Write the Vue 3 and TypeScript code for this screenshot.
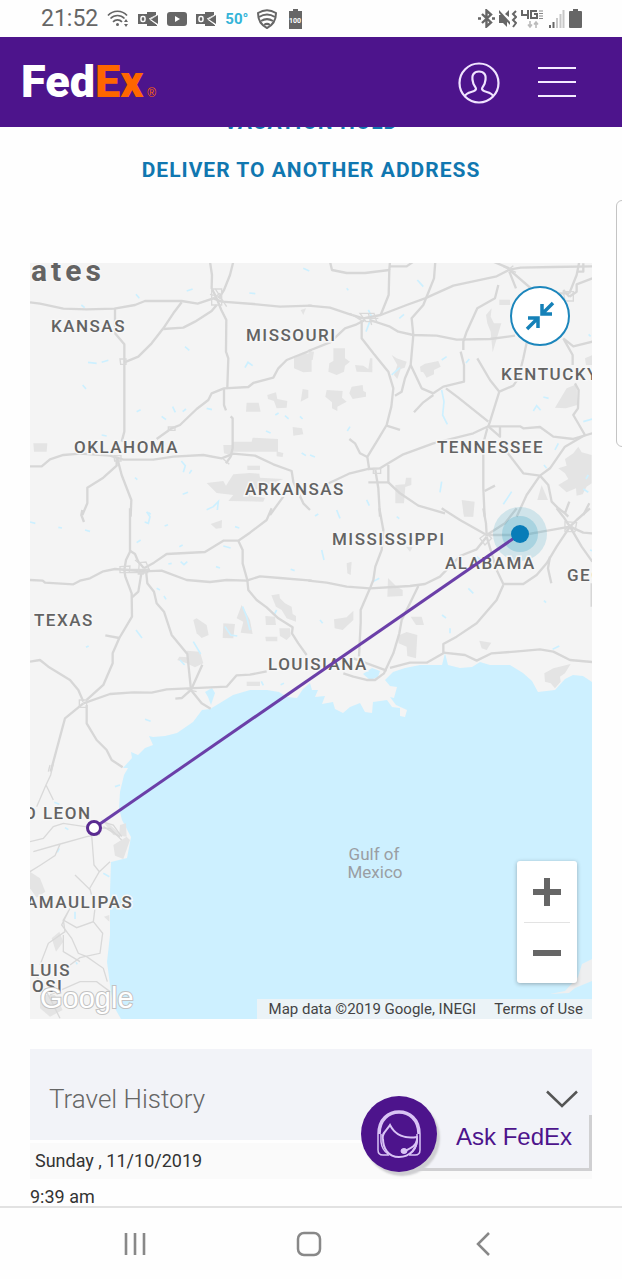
<script setup lang="ts">
import { ref } from 'vue'

interface Tile {
  x: number
  y: number
  roads: string[]
  minor: string[]
  land: string[]
  lakes: string[]
}

interface Label {
  x: number
  y: number
  text: string
}

/* Each tile is drawn at three units per map pixel, from its own origin. */
const tiles: Tile[] = [
  {
    x: 20,
    y: 255,
    roads: [
      'M30 142L60 146L130 161L200 163L283 161L345 150L375 138L485 138L533 146L580 130L605 140L700 147L780 155L875 152',
      'M570 20L576 60L575 100L590 130L604 165L619 195L618 290L625 310L622 398',
      'M640 20L630 60L612 105L596 130',
      'M285 160V235L313 268V530L305 560',
      'M485 142L460 175L430 220L395 265L355 305L313 322',
      'M430 222L490 218L525 200L575 168L590 150',
      'M410 552L455 520L480 510L530 462L565 435L575 415L612 400L685 396L700 384L760 368L775 340L800 315L875 285',
      'M612 402V450L618 466',
      'M632 484L638 490V580L632 605L618 625',
      'M30 634H65L90 613L130 600L180 596L270 602L310 614L400 614L460 605L550 600L605 610L640 596L705 602L760 628L815 648L820 680L850 745L870 765',
      'M290 605V632L250 668L202 698V745L187 780',
      'M292 610L305 660L334 735L332 785',
      'M750 780L790 725'
    ],
    minor: [
      'M575 102H605V150H575ZM570 118L596 124L614 145M585 100L620 155M572 135L600 115',
      'M300 312H318V328H302ZM445 516H465V526H445Z',
      'M282 602H303V618H284ZM610 612L628 628'
    ],
    land: [
      'M822 310L850 292L875 300V350L850 352L822 340Z',
      'M680 443H716L722 470H678Z',
      'M742 420L768 412L772 432L802 438L800 458L770 460L762 438L744 432Z',
      'M848 402L865 405V428L842 440Z',
      'M818 516L846 520L850 538L820 542Z',
      'M610 570H635L640 560L695 560L698 548L774 552V590L790 594L788 606L770 604V590L635 590L632 600L612 595Z',
      'M682 632H720V645H682Z',
      'M560 684L610 678L618 692L640 658L690 654L718 656L720 668L790 672L740 690L720 700L690 708V722L735 728L730 740L625 738L640 720L590 714Z',
      'M40 565L82 565L80 590L42 590Z',
      'M842 165L858 160L850 180Z'
    ],
    lakes: [
      'M348 118L358 130M184 150L194 158M500 108L518 102M495 275L508 286M204 322L230 325M245 322L265 316M188 390L198 402',
      'M675 338L684 322L698 332M458 455L466 472M488 470L498 462M425 484L438 494M560 460L576 464M350 470L362 464',
      'M245 540L260 543M484 618L496 632L490 652M515 645L508 656M345 668L352 674M738 528L752 534M766 480L776 474M795 482L806 492M840 484L848 492M845 594L858 602',
      'M560 764L580 755L595 740L592 765M488 718L504 712M385 772L392 778M688 114L706 116M850 40L868 48'
    ]
  },
  {
    x: 310,
    y: 255,
    roads: [
      'M60 20L66 45L110 54L165 54L238 45L236 120L212 180',
      'M238 45L240 20M240 34H290L310 20',
      'M376 20L372 70L340 150L305 190L310 240L302 330L285 370L275 410L255 422',
      'M-5 152L60 158L120 178L160 190L212 180L290 150L345 130L430 92L560 64L598 44L632 38L730 36L847 34',
      'M-5 288L60 262L105 220L140 208L165 195',
      'M598 40L550 20M598 44L665 102M598 50L618 100',
      'M808 20L800 60L778 115M778 115L740 115M778 125L800 110V88L847 70M805 50H820V25',
      'M778 125L760 105M760 250L788 300V330M760 250L790 274L847 260',
      'M155 200V250L190 295L235 350L250 400L244 455L230 510L200 560L172 606L178 645',
      'M180 195L240 215L265 230L310 240L380 242L440 254L540 252L615 242',
      'M565 90L555 130L502 160L470 230L460 260V285',
      'M452 290L462 330V380L400 395L370 415L335 400L302 330',
      'M370 420L340 442L312 472',
      'M502 310L540 375L568 410',
      'M655 240L640 310L625 370L610 392L568 410L540 500L535 514',
      'M408 400L445 428L535 500',
      'M230 512L270 525',
      'M118 552L135 565L150 595L172 606',
      'M50 688L120 655L175 642L210 640L280 598L370 565L490 535L535 514L630 514L640 520L690 516L730 545L790 552L847 535',
      'M795 385L806 405L804 460L790 480L825 540',
      'M535 514L570 545V514',
      'M532 520L520 565V700L524 785',
      'M524 708L555 692',
      'M590 590L640 655L690 662L720 640L765 575L825 540',
      'M690 662L650 720L620 785M690 662L715 690L725 740L745 760L765 775L778 740M765 775L775 785M820 780L838 745',
      'M196 645L205 700L210 785M175 682H235V630',
      'M235 682L270 715L325 752L405 775'
    ],
    minor: [
      'M150 175H192L200 200H168ZM120 175L160 200M175 175L185 210M145 190L205 190',
      'M580 35L618 52M585 52L610 32M760 110H790V138H765Z',
      'M190 640H212V655H190Z'
    ],
    land: [
      'M70 280H105V310L120 320L105 332L102 350L80 360L55 350L58 325L70 318Z',
      'M135 330L160 332L175 342L180 310H187V352L140 350Z',
      'M125 395L158 390L160 408L168 412V425L128 432L118 415Z',
      'M50 405L98 408L96 428L110 440L82 455V468L66 460V442L46 425Z',
      'M330 335L345 326L385 318L392 335L372 345V358L350 368L340 352L332 350Z',
      'M528 180L545 160L542 185L552 205L574 205L548 292L542 230L532 205Z',
      'M568 134H600V150H568Z',
      'M735 458L752 430L770 400L800 388L802 450L768 460Z',
      'M745 640L770 632L765 612L790 595L805 575L815 592L845 600V685L830 695L818 718L800 722L798 700L770 712L745 690L775 672L765 655Z',
      'M256 690L285 688L288 668H304V690L286 696L282 745H256Z',
      'M455 735L494 740L490 785H462Z',
      'M682 735L695 690L714 735Z',
      'M245 300L260 310L290 320L284 338L272 342L262 372L252 360L262 330Z',
      'M-5 288L12 290L8 315L-5 316ZM825 310L847 300V330L828 330Z'
    ],
    lakes: [
      'M268 190L282 178M175 165L185 185L168 230M322 75L340 95M110 100L115 106M395 315L410 305M478 312L468 324M270 338L245 360',
      'M395 405L402 440L398 480L412 508M670 468L680 452L692 466M700 426L716 430M820 500L847 492M745 565L735 585M702 630L710 640M120 515L112 528M0 600L15 606',
      'M605 710L580 748M395 680L390 712M170 735L178 752M835 660L828 672M820 702L835 712M836 238L842 244'
    ]
  },
  {
    x: 20,
    y: 510,
    roads: [
      'M187 0L184 15L192 36M330 -5V125L318 150L313 180',
      'M330 122L345 132L355 155L372 175',
      'M30 210L68 212L75 218L160 223L180 212L210 205L250 184L285 177L370 184L425 182L500 210L570 216L620 210L680 212L720 199L780 204L875 212',
      'M372 175L402 158L440 132L555 126L610 92L655 92L690 68L740 30L755 -5',
      'M655 92L668 120V160L682 210L685 240L710 270L740 292L775 325L818 352L816 370L835 400L860 435',
      'M313 180L316 200L335 250L336 320L298 384L278 430V460L250 525L200 570',
      'M336 262L355 245L365 185L378 180L382 220L402 245L410 280L432 305L455 375L502 432L513 540',
      'M256 376L298 384M547 464L513 540M466 566L486 564L513 540L545 580L572 596',
      'M30 455L60 450L85 470L150 510L175 540L190 575',
      'M190 580L270 552L340 547L395 548L440 538L620 530L650 496L690 494L740 484',
      'M190 580L135 625L92 785M200 585V640L230 690L260 720L275 750L308 772'
    ],
    minor: [
      'M300 170L330 168L328 188H300ZM358 158L378 156L386 175L370 192H355ZM298 188H385M345 150L365 165M295 178H390',
      'M178 570H200V592H178ZM500 538L530 545'
    ],
    land: [
      'M520 330L530 325L560 345L566 375L545 384L530 370Z',
      'M610 340L645 342L640 385L608 384Z',
      'M665 285L690 330L698 372L662 368L670 335L650 325Z',
      'M754 256L778 252L780 265L795 280L815 290L818 312L828 318V335L800 325L785 300L768 290Z',
      'M736 318L765 320L768 345H738ZM778 355L810 355L812 378L800 390L780 378ZM736 380H772V394H738Z',
      'M500 422L540 425L550 460L525 472L500 460L472 450L478 440L505 442Z',
      'M572 42L606 30L605 54L588 56Z',
      'M680 515H720V528H680Z'
    ],
    lakes: [
      'M380 5L390 20L385 40L374 36M350 98L362 90M434 48L444 44M445 162L455 160M482 155L492 164L502 155M588 170L600 174M645 50L658 54',
      'M668 290L680 320L690 360M615 350L632 375L652 378M520 395L542 432M480 450L494 465M348 360L366 384M410 235L420 240M432 258L438 268M770 300L762 315M375 628L392 634',
      'M30 36L46 40M115 52L126 54M195 60L210 64M610 108L632 114M478 110L488 105M724 514L730 526M782 524L792 520M812 178L824 182M198 412L206 408'
    ]
  },
  {
    x: 310,
    y: 510,
    roads: [
      'M395 -5L450 30L530 75',
      'M520 -5L528 40L530 75M620 -5L585 40L530 75L640 75L700 64L780 50',
      'M208 -5L220 60L215 120L196 170L190 210L180 235L152 300V340L147 440',
      'M-5 212L50 218L110 230L180 235L300 228L345 222L390 200L450 138L500 118L530 80',
      'M325 228L300 280L275 330L268 370L250 430L222 490L195 510H170L130 500L100 490',
      'M530 80L560 180L580 222L640 222L680 195L710 160L740 110L780 50',
      'M580 225L560 270L500 340L440 380L400 402V430L350 458H300L240 474',
      'M400 428L465 435L500 452L545 430L615 425L690 418L730 425L780 450L847 456',
      'M780 50L760 20L740 -5M780 50L820 68L847 70M780 50L800 30L840 -5M780 50L815 110L847 155M720 140L714 175L724 220M845 220V290',
      'M130 445L230 482'
    ],
    minor: [
      'M765 35L800 38L795 65H765ZM770 40L800 60M765 60L795 35',
      'M510 85L530 70L545 85L525 105Z'
    ],
    land: [
      'M234 204L258 228L278 240V258L232 260Z',
      'M72 328L110 322L130 302V330L98 360L74 355Z',
      'M302 320L335 320L342 345H318Z',
      'M262 378L290 366L322 375L318 445L292 438L290 410L266 400Z',
      'M508 392L544 398L530 420L515 415Z',
      'M703 490L730 475L782 462L765 490L750 500L752 515L735 535L722 520L705 515Z',
      'M110 160L125 155L122 195L112 190Z',
      'M288 110L308 112L300 125Z',
      'M460 0H485L488 20L462 16Z'
    ],
    lakes: [
      'M188 215L208 205M475 235L490 250M396 315L408 324M728 418L748 408M80 0L90 25M35 120L42 150M420 355V370M702 272L708 278M30 330L38 340',
      'M15 18L25 12M840 120L847 122M260 20L268 26M500 140L510 148'
    ]
  },
  {
    x: 20,
    y: 765,
    roads: [],
    minor: [
      'M100 -5L92 30L78 60L50 125M78 60L100 105M30 230L70 220L100 185L130 175L215 188L270 190L305 225',
      'M40 260L110 240L200 215L240 208M120 238L105 272L62 300L30 320M215 210L222 300L238 320L270 290M238 320L208 372L165 330M210 372L225 430L220 470L170 488L130 465L150 430L125 480L155 520L175 565L200 575L250 610L262 650',
      'M220 470L248 505L240 565L180 578L150 600M130 465L135 500L85 535L60 600M30 620L60 645L90 700L120 760M90 690L180 650H230L270 680M250 185L300 215M245 170L280 180L305 215M90 0L85 20M130 510L130 560L180 590'
    ],
    land: [
      'M280 240L320 215L330 225L310 282L285 272Z',
      'M95 520L118 500L130 530L108 560Z',
      'M30 320L60 340L76 380L50 398L30 370Z',
      'M60 690L105 690L128 735L90 755L60 730Z',
      'M252 455L268 450V470ZM242 160L268 178L298 205L300 180L318 175L320 215L280 210Z'
    ],
    lakes: [
      'M165 440V462M285 65L300 60M103 112L118 118M135 188L145 194M250 325L268 335M118 250L112 262M168 592L172 598'
    ]
  }
]

const coast =
  'M121 1019L113 1005L110 985L107 962L110 935V892L111 862L127 858L131 837L122 820L119 808L120 792L124 775L128 768L123 768L132 758L131 752L138 755L145 748L153 745L149 736L153 737L165 736L177 733L193 722L202 710L210 709L220 703L233 695L250 690H267L279 692L287 697L297 698L303 689L310 683L312 690L318 690L315 697L325 696L322 704L333 702L335 709L343 713L350 707L360 703L365 712L372 713L373 702L387 700L392 707L400 708V716L405 717L407 710L396 705L390 697L394 698L397 687L390 686L385 680L393 672L405 668L420 665L442 665L445 653L448 665L460 668L472 667L480 662L490 665L510 665L523 673L532 681L538 692L555 690L565 679L573 675L583 676L592 682V1019Z'

const labels: Label[] = [
  { x: 51, y: 332, text: 'KANSAS' },
  { x: 246, y: 341, text: 'MISSOURI' },
  { x: 501, y: 380, text: 'KENTUCKY' },
  { x: 74, y: 453, text: 'OKLAHOMA' },
  { x: 437, y: 453, text: 'TENNESSEE' },
  { x: 245, y: 495, text: 'ARKANSAS' },
  { x: 332, y: 545, text: 'MISSISSIPPI' },
  { x: 445, y: 569, text: 'ALABAMA' },
  { x: 567, y: 581, text: 'GEORGIA' },
  { x: 34, y: 626, text: 'TEXAS' },
  { x: 268, y: 670, text: 'LOUISIANA' },
  { x: 24, y: 819, text: 'O LEON' },
  { x: 26, y: 908, text: 'AMAULIPAS' },
  { x: 30, y: 976, text: 'LUIS' },
  { x: 32, y: 992, text: 'OSI' }
]

const historyOpen = ref(true)
</script>

<template>
  <div class="page">
    <div class="status">
      <div class="status-left">
        <time class="clock">21:52</time>
        <svg viewBox="0 0 22 20" width="22" height="20">
          <g fill="none" stroke="#666" stroke-width="1.7">
            <path d="M1 6.500C6 .8 15 .8 20 6.500M3.500 9.500C7.500 5.500 13.500 5.500 17.500 9.500M6 12.800C8.500 10.200 12.500 10.200 15 12.800" />
          </g>
          <circle cx="10.500" cy="15.500" r="1.500" fill="#666" />
          <path d="M17 13l2-3 2 3zM17 15l2 3 2-3z" fill="#666" />
        </svg>
        <template v-for="n in 2" :key="n">
          <svg viewBox="0 0 20 16" width="20" height="16">
            <path d="M9 1H18V5L12 8L19 14V15H9Z" fill="#666" />
            <path d="M20 4V13L13 8.500Z" fill="#666" />
            <path d="M0 3H10V13H0Z" fill="#666" />
            <rect x="3" y="5.500" width="4" height="5" rx="1.500" fill="none" stroke="#fff" stroke-width="1.500" />
            <path d="M11 8L18 4.500M12 8.500L19 13.500" stroke="#fff" />
          </svg>
          <svg v-if="n === 1" viewBox="0 0 20 14" width="20" height="14">
            <rect width="20" height="14" rx="3" fill="#666" />
            <path d="M8 4V10L13 7Z" fill="#fff" />
          </svg>
        </template>
        <span class="temp">50°</span>
        <svg viewBox="0 0 20 20" width="20" height="20">
          <g fill="none" stroke="#666" stroke-width="2">
            <path d="M1 4C7 .3 13 .3 19 4C19 11 16 16 10 19C4 16 1 11 1 4Z" />
            <path d="M2 8C7 5 13 5 18 8M4 12C8 9.500 12 9.500 16 12M7 16C9 14.500 11 14.500 13 16" />
          </g>
        </svg>
        <svg class="charge" viewBox="0 0 13 20" width="13" height="20">
          <path d="M4 0H9V2H13V20H0V2H4Z" fill="#666" />
          <text x="6" y="14" text-anchor="middle" font-size="7" font-weight="700" fill="#fff">100</text>
        </svg>
      </div>
      <div class="status-right">
        <svg viewBox="0 0 17 19" width="17" height="19">
          <path d="M4 5L13 13.500L8.500 17.500V1.500L13 5.500L4 14M0 9.500H3M14 9.500H17" fill="none" stroke="#666" stroke-width="2.400" />
        </svg>
        <svg viewBox="0 0 18 18" width="18" height="18">
          <path d="M0 5H3L8 10V17L4 13H0ZM6 4L10 0V7ZM0 0L11 12V15L0 3Z" fill="#666" />
          <path d="M17 1L14 4L17 7L14 10L17 13L14 17" fill="none" stroke="#666" stroke-width="2" />
        </svg>
        <svg viewBox="0 0 23 20" width="23" height="20">
          <path d="M1 1V6H8M7 1V10M16 2H10V9H16V5H13" fill="none" stroke="#666" stroke-width="2" />
          <path d="M18 2H22M18 4.500H22M18 7H22M18 9.500H22" stroke="#888" />
          <path d="M9 12V18M7 15.500L9 18L11 15.500M15 19V13M13 15.500L15 13L17 15.500" fill="none" stroke="#bbb" stroke-width="1.600" />
        </svg>
        <svg viewBox="0 0 17 18" width="17" height="18">
          <path d="M1 15H3V18H1ZM4.500 12H6.500V18H4.500Z" fill="#666" />
          <path d="M8 8H10V18H8ZM11.500 4H13.500V18H11.500ZM14.500 0H16.500V18H14.500Z" fill="#c8c8c8" />
        </svg>
        <svg viewBox="0 0 13 19" width="13" height="19">
          <path d="M4 0H9V2H12Q13 2 13 3V18Q13 19 12 19H1Q0 19 0 18V3Q0 2 1 2H4Z" fill="#666" />
        </svg>
      </div>
    </div>

    <header class="bar">
      <a class="logo" href="#" aria-label="FedEx home"><span>Fed</span><span class="ex">Ex</span><small>®</small></a>
      <div class="bar-actions">
        <button type="button" aria-label="Account">
          <svg viewBox="0 0 42 42" width="42" height="42" fill="none" stroke="#f0e4ff" stroke-width="2.200">
            <circle cx="21" cy="21" r="19.500" />
            <path d="M7 34C9 29 17 31 18 27C18 25 15 23 15 20C13 13 16 9.500 21 9.500C26 9.500 29 13 27 20C27 23 24 25 24 27C25 31 33 29 35 34" />
          </svg>
        </button>
        <button type="button" aria-label="Menu">
          <svg viewBox="0 0 38 32" width="38" height="32" stroke="#f4ebff" stroke-width="2">
            <path d="M0 1H38M0 15H38M0 29H38" />
          </svg>
        </button>
      </div>
    </header>

    <main>
      <nav class="options">
        <a href="#">VACATION HOLD</a>
        <a href="#">DELIVER TO ANOTHER ADDRESS</a>
      </nav>

      <section class="map" aria-label="Shipment route">
        <svg class="canvas" viewBox="30 263 562 756">
          <rect x="30" y="263" width="562" height="756" fill="#f4f4f4" />
          <path :d="coast" fill="#cdf0ff" />
          <path d="M550 994L565 991L578 977L582 964L592 959V981L575 988L569 993Z" fill="#eeeff0" />
          <path d="M208 697L205 692L212 688L215 693L211 705Z" fill="#cdf0ff" />
          <path d="M363 674L372 668L380 671L378 677L370 680Z" fill="#cdf0ff" />
          <g v-for="(t, i) in tiles" :key="i" :transform="`translate(${t.x} ${t.y}) scale(0.3333)`" fill="none">
            <path v-for="d in t.land" :key="d" :d="d" fill="#e4e4e4" />
            <path v-for="d in t.lakes" :key="d" :d="d" stroke="#cdf0ff" stroke-width="5" />
            <path v-for="d in t.roads" :key="d" :d="d" stroke="#d7d7d7" stroke-width="7" stroke-linejoin="round" />
            <path v-for="d in t.minor" :key="d" :d="d" stroke="#d9d9d9" stroke-width="4" />
          </g>
          <circle cx="520" cy="534" r="27" fill="#0a8fb8" opacity="0.150" />
          <circle cx="520" cy="534" r="18" fill="#0a8fb8" opacity="0.200" />
          <g class="labels">
            <text v-for="l in labels" :key="l.text" :x="l.x" :y="l.y">{{ l.text }}</text>
            <text class="country" x="31" y="281">ates</text>
          </g>
          <g class="sea" text-anchor="middle">
            <text x="374" y="860">Gulf of</text>
            <text x="375" y="878">Mexico</text>
          </g>
          <path d="M94 828L520 534" stroke="#6b3fa8" stroke-width="3" />
          <circle cx="520" cy="534" r="9" fill="#087cb8" />
          <circle cx="94" cy="828" r="6.500" fill="#fff" stroke="#5a2b91" stroke-width="3" />
          <text class="google" x="40" y="1008">Google</text>
        </svg>
        <button class="collapse" type="button" aria-label="Shrink map">
          <svg viewBox="0 0 30 30" width="30" height="30" fill="none" stroke="#1581b8" stroke-width="3.500">
            <path d="M28 2L18 12M17 3V13H27M2 28L12 18M3 17H13V27" />
          </svg>
        </button>
        <div class="zoom">
          <button type="button" aria-label="Zoom in">
            <svg viewBox="0 0 28 28" width="28" height="28"><path d="M0 14H28M14 0V28" stroke="#666" stroke-width="6" /></svg>
          </button>
          <button type="button" aria-label="Zoom out">
            <svg viewBox="0 0 28 28" width="28" height="28"><path d="M0 14H28" stroke="#666" stroke-width="6" /></svg>
          </button>
        </div>
        <div class="credit">
          <span>Map data ©2019 Google, INEGI</span>
          <a href="#">Terms of Use</a>
        </div>
      </section>

      <section class="history">
        <h2>
          <button type="button" :aria-expanded="historyOpen" @click="historyOpen = !historyOpen">
            Travel History
            <svg viewBox="0 0 32 18" width="32" height="18" fill="none" stroke="#555" stroke-width="2.500">
              <path d="M1 1.500L16 16L31 1.500" />
            </svg>
          </button>
        </h2>
        <template v-if="historyOpen">
          <h3>Sunday , 11/10/2019</h3>
          <time class="event">9:39 am</time>
        </template>
        <button class="ask" type="button">
          <span class="badge">
            <svg viewBox="0 0 44 48" width="44" height="48" fill="none" stroke="#d9c4f5">
              <path d="M2 24C2 9 12 2 22 2C32 2 42 9 42 24" stroke-width="3.500" />
              <path d="M1 24V40Q1 45 6 45H12M43 24V40Q43 45 38 45H32M4 24V32Q5 40 11 44M40 24V32Q39 40 33 44" stroke-width="1.500" />
              <path d="M6 29C4 24 10 20 13 15C18 25 28 29 40 27C41 38 33 47 22 47C11 47 6 38 6 29" stroke-width="2" />
              <path d="M40 30C39 36 34 38 28 41" stroke-width="2" />
              <ellipse cx="27" cy="41" rx="3" ry="2.500" fill="#d9c4f5" />
            </svg>
          </span>
          <span class="ask-text">Ask FedEx</span>
        </button>
      </section>
    </main>

    <nav class="system" aria-label="System">
      <button type="button" aria-label="Recent apps">
        <svg viewBox="0 0 24 24" width="24" height="24" stroke="#888" stroke-width="2.600"><path d="M3 1V23M12 1V23M21 1V23" /></svg>
      </button>
      <button type="button" aria-label="Home">
        <svg viewBox="0 0 26 26" width="26" height="26"><rect x="2" y="2" width="22" height="22" rx="6" fill="none" stroke="#888" stroke-width="2.500" /></svg>
      </button>
      <button type="button" aria-label="Back">
        <svg viewBox="0 0 24 24" width="24" height="24" fill="none" stroke="#888" stroke-width="2.500"><path d="M18 1L7 12L18 23" /></svg>
      </button>
    </nav>
    <div class="edge-handle"></div>
  </div>
</template>

<style>
body {
  background: #fefefe;
}
</style>

<style scoped>
.page {
  position: relative;
  display: flex;
  flex-direction: column;
  min-height: 100vh;
  overflow: hidden;
  background: #fefefe;
  color: #333;
  font-family: Roboto, 'Liberation Sans', sans-serif;
}
button {
  padding: 0;
  border: 0;
  background: none;
  font: inherit;
  color: inherit;
  cursor: pointer;
}
svg {
  display: block;
}
a {
  color: inherit;
  text-decoration: none;
}
.status,
.status-left,
.status-right {
  display: flex;
  align-items: center;
}
.status {
  justify-content: space-between;
  height: 37px;
  padding: 0 40px 0 41px;
}
.status-left {
  gap: 9px;
}
.status-right {
  gap: 4px;
}
.clock {
  font-size: 23px;
  color: #666;
}
.temp {
  font-size: 15px;
  font-weight: 700;
  color: #35b4d8;
}
.charge {
  margin-left: 3px;
}
.bar {
  position: relative;
  z-index: 2;
  display: flex;
  align-items: center;
  justify-content: space-between;
  height: 90px;
  padding: 2px 46px 0 21px;
  box-sizing: border-box;
  background: #4d148c;
}
.logo {
  display: flex;
  align-items: baseline;
  padding-top: 8px;
  font-size: 45px;
  line-height: 50px;
  font-weight: 900;
  color: #fff;
}
.ex {
  color: #ff6600;
}
.logo small {
  margin-left: 4px;
  font-family: 'Liberation Sans', sans-serif;
  font-size: 12px;
  font-weight: 400;
  color: #ff6600;
}
.bar-actions {
  display: flex;
  align-items: center;
  gap: 38px;
}
main {
  padding: 0 30px;
}
.options {
  display: flex;
  flex-direction: column;
  align-items: center;
  margin-top: -29px;
  color: #1077b0;
  font-size: 21px;
  font-weight: 700;
  line-height: 48px;
  letter-spacing: 1px;
}
.map {
  position: relative;
  margin-top: 69px;
}
.canvas {
  width: 100%;
  height: auto;
}
.labels text {
  font-size: 17px;
  font-weight: 500;
  letter-spacing: 1.5px;
  fill: #636363;
  stroke: #f7f7f7;
  stroke-width: 3px;
  paint-order: stroke;
}
.labels .country {
  font-size: 30px;
  font-weight: 700;
  letter-spacing: 4px;
}
.sea text {
  font-size: 17px;
  fill: #9a9ea3;
}
.google {
  font-family: 'Liberation Sans', sans-serif;
  font-size: 29px;
  fill: #fff;
  stroke: #c2c2c2;
  stroke-width: 2px;
  paint-order: stroke;
}
.collapse {
  position: absolute;
  top: 23px;
  right: 22px;
  display: grid;
  place-items: center;
  width: 60px;
  height: 60px;
  border: 2px solid #1c86bc;
  border-radius: 50%;
  background: #fff;
}
.zoom {
  position: absolute;
  right: 15px;
  bottom: 36px;
  display: grid;
  width: 60px;
  border-radius: 3px;
  background: #fff;
  box-shadow: 0 1px 4px rgba(0, 0, 0, 0.3);
}
.zoom button {
  display: grid;
  place-items: center;
  height: 61px;
}
.zoom button + button {
  margin: 0 7px;
  border-top: 1px solid #e3e3e3;
}
.credit {
  position: absolute;
  right: 0;
  bottom: 0;
  display: flex;
  gap: 18px;
  padding: 0 9px 0 12px;
  background: #ebf3f7;
  color: #444;
  font-size: 15px;
  line-height: 20px;
}
.history {
  position: relative;
  margin-top: 30px;
}
h2,
h3 {
  margin: 0;
}
h2 button {
  display: flex;
  align-items: center;
  justify-content: space-between;
  width: 100%;
  height: 91px;
  padding: 8px 14px 0 19px;
  background: #f2f3f8;
  color: #666;
  font-size: 26px;
  font-weight: 300;
}
h3 {
  margin-top: 3px;
  padding: 0 5px;
  background: #fafafa;
  font-size: 18px;
  font-weight: 400;
  line-height: 36px;
}
.event {
  display: block;
  height: 22px;
  padding-top: 5px;
  font-size: 18px;
  line-height: 26px;
}
.ask {
  position: absolute;
  top: 47px;
  right: 0;
  display: flex;
  align-items: center;
  color: #4d148c;
}
.badge {
  z-index: 1;
  display: grid;
  place-items: center;
  width: 76px;
  height: 76px;
  border-radius: 50%;
  background: #4d148c;
  box-shadow: 3px 4px 2px #cfcfd2;
}
.ask-text {
  margin: 16px 3px 4px -38px;
  padding: 0 17px 6px 57px;
  background: #f2f3f8;
  box-shadow: 3px 3px 0 #d0d0d2;
  font-family: 'Liberation Sans', sans-serif;
  font-size: 24px;
  line-height: 50px;
}
.system {
  position: relative;
  z-index: 2;
  display: grid;
  grid-template-columns: repeat(3, 1fr);
  height: 73px;
  margin-top: auto;
  padding: 0 52px 0 48px;
  border-top: 2px solid #e2e2e2;
  box-sizing: border-box;
  background: #fefefe;
}
.system button {
  display: grid;
  place-items: center;
}
.edge-handle {
  position: absolute;
  top: 200px;
  right: -6px;
  width: 10px;
  height: 245px;
  border: 1px solid #c4c4c4;
  border-radius: 6px;
}
</style>
